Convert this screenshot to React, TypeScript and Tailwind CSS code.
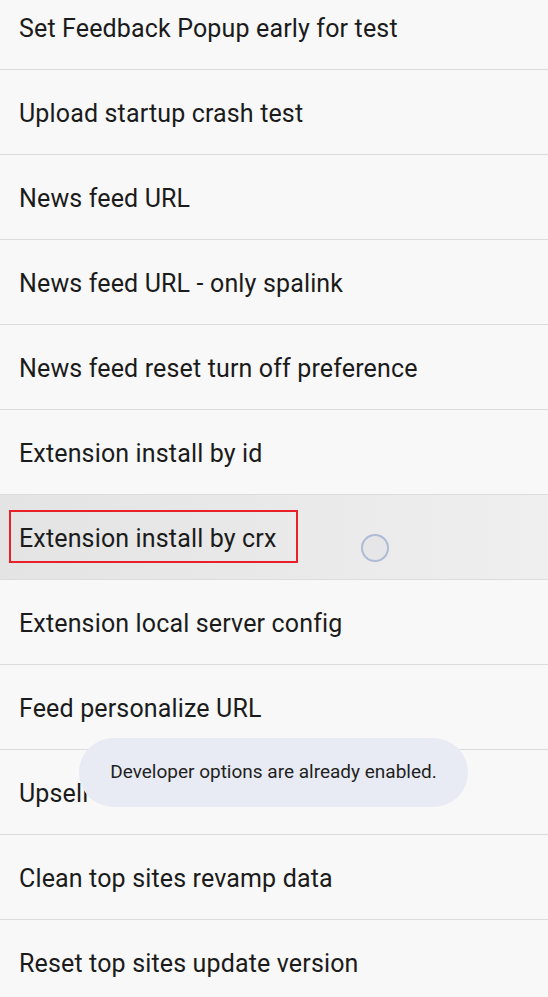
import React from "react";

const items = [
  "Set Feedback Popup early for test",
  "Upload startup crash test",
  "News feed URL",
  "News feed URL - only spalink",
  "News feed reset turn off preference",
  "Extension install by id",
  "Extension install by crx",
  "Extension local server config",
  "Feed personalize URL",
  "Upsell",
  "Clean top sites revamp data",
  "Reset top sites update version",
];

export default function App() {
  return (
    <div
      className="relative w-[548px] h-[997px] overflow-hidden bg-[#f8f8f8] text-[#1b1b1b]"
      style={{ fontFamily: "Roboto, 'Liberation Sans', sans-serif" }}
    >
      <div className="-mt-[15px]">
        {items.map((label, i) => {
          const pressed = i === 6;
          return (
            <div
              key={label}
              className={
                pressed
                  ? "relative h-[85px] flex items-center pl-[19px] pt-[2px] border-b border-[#dcdcdc] bg-gradient-to-r from-[#e4e4e4] via-[#e9e9e9] to-[#efefef]"
                  : "relative h-[85px] flex items-center pl-[19px] pt-[2px] border-b border-[#dcdcdc]"
              }
            >
              <span className="text-[25px] leading-none tracking-[0.15px]">{label}</span>
              {pressed && (
                <>
                  <span className="absolute left-[9px] top-[15px] w-[289px] h-[53px] border-2 border-[#e8202a]" />
                  <span className="absolute left-[361px] top-[39px] w-[28px] h-[28px] rounded-full border-2 border-[#aebbd5] bg-[#e6e6e8]" />
                </>
              )}
            </div>
          );
        })}
      </div>

      <div className="absolute left-[79px] top-[738px] w-[389px] h-[69px] rounded-full bg-[#e8ebf3] flex items-center justify-center">
        <span className="text-[19px] text-[#1f1f22]">Developer options are already enabled.</span>
      </div>
    </div>
  );
}
